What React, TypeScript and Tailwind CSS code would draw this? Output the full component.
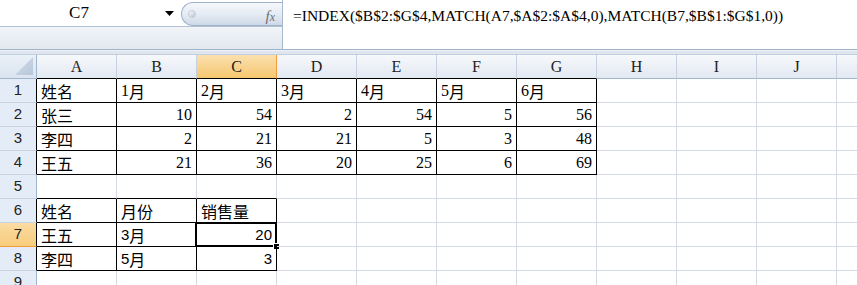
import React from "react";

const COLS = ["A", "B", "C", "D", "E", "F", "G", "H", "I", "J"];

type Cell = { v: string; right?: boolean; sans?: boolean };

const data: Record<number, Record<number, Cell>> = {
  1: { 0: { v: "姓名" }, 1: { v: "1月" }, 2: { v: "2月" }, 3: { v: "3月" }, 4: { v: "4月" }, 5: { v: "5月" }, 6: { v: "6月" } },
  2: { 0: { v: "张三" }, 1: { v: "10", right: true }, 2: { v: "54", right: true }, 3: { v: "2", right: true }, 4: { v: "54", right: true }, 5: { v: "5", right: true }, 6: { v: "56", right: true } },
  3: { 0: { v: "李四" }, 1: { v: "2", right: true }, 2: { v: "21", right: true }, 3: { v: "21", right: true }, 4: { v: "5", right: true }, 5: { v: "3", right: true }, 6: { v: "48", right: true } },
  4: { 0: { v: "王五" }, 1: { v: "21", right: true }, 2: { v: "36", right: true }, 3: { v: "20", right: true }, 4: { v: "25", right: true }, 5: { v: "6", right: true }, 6: { v: "69", right: true } },
  6: { 0: { v: "姓名" }, 1: { v: "月份" }, 2: { v: "销售量" } },
  7: { 0: { v: "王五" }, 1: { v: "3月", sans: true }, 2: { v: "20", right: true, sans: true } },
  8: { 0: { v: "李四" }, 1: { v: "5月", sans: true }, 2: { v: "3", right: true, sans: true } },
};

function inTable(r: number, c: number) {
  if (r >= 1 && r <= 4 && c >= 0 && c <= 6) return true;
  if (r >= 6 && r <= 8 && c >= 0 && c <= 2) return true;
  return false;
}

function Txt({ s, sans }: { s: string; sans?: boolean }) {
  const parts = s.split(/([\u4e00-\u9fff]+)/).filter((p) => p.length > 0);
  return (
    <>
      {parts.map((p, i) =>
        /[\u4e00-\u9fff]/.test(p) ? (
          <span key={i} className="text-[16px] [font-family:'Noto_Sans_CJK_SC',sans-serif]">
            {p}
          </span>
        ) : sans ? (
          <span key={i} className="text-[15px] [font-family:'Liberation_Sans',Arial,sans-serif]">
            {p}
          </span>
        ) : (
          <span key={i} className="text-[16px] [font-family:'Liberation_Serif',serif]">
            {p}
          </span>
        )
      )}
    </>
  );
}

function FxPill() {
  return (
    <div className="relative w-[101px] h-[24px] mt-[2px] rounded-l-full border border-r-0 border-[#9fb1c8] bg-gradient-to-b from-[#f5f7fb] via-[#e6ecf4] to-[#cfd9e7] flex items-center">
      <div className="ml-[6px] w-[8px] h-[8px] rounded-full bg-gradient-to-br from-[#fdfdfe] to-[#b9c4d2] border border-[#c2ccd8]" />
      <span className="absolute right-[7px] top-[2px] text-[15px] italic text-[#6b6f75] [font-family:'Liberation_Serif',serif]">
        f<span className="text-[12px]">x</span>
      </span>
    </div>
  );
}

export default function App() {
  const rows = [1, 2, 3, 4, 5, 6, 7, 8, 9];
  return (
    <div className="w-[857px] h-[285px] overflow-hidden bg-white relative">
      {/* Formula bar */}
      <div className="flex h-[50px] border-b border-[#a3b3c7]">
        <div className="w-[282px] flex flex-col">
          <div className="h-[27px] flex items-start bg-white border-b border-[#b3c1d3]">
            <div className="w-[158px] h-[26px] flex items-center justify-center text-[17px] text-black [font-family:'Liberation_Serif',serif]">
              C7
            </div>
            <div className="w-[23px] h-[26px] flex items-center justify-center">
              <svg width="9" height="5" viewBox="0 0 9 5">
                <polygon points="0,0 9,0 4.5,5" fill="#000" />
              </svg>
            </div>
            <FxPill />
          </div>
          <div className="flex-1 bg-gradient-to-b from-[#f1f4f8] to-[#e2e8f0]" />
        </div>
        <div className="flex-1 bg-white border-l border-[#a8b8cc] pl-[10px] pt-[6px] leading-[20px] text-black whitespace-nowrap text-[15.5px] [font-family:'Liberation_Serif',serif]">
          =INDEX($B$2:$G$4,MATCH(A7,$A$2:$A$4,0),MATCH(B7,$B$1:$G$1,0))
        </div>
      </div>
      <div className="h-[5px] bg-[#dfe6ef] border-b border-[#c3cfdd] border-t border-t-[#eef2f7]" />

      {/* Sheet grid */}
      <div className="grid grid-cols-[37px_repeat(10,80px)_1fr]">
        {/* header row */}
        <div className="h-[24px] border-r border-b border-[#9eb6ce] bg-gradient-to-b from-[#eaf0f7] to-[#dbe4ef] flex items-end justify-end">
          <svg width="20" height="20" viewBox="0 0 20 20" className="mr-[2px] mb-[2px]">
            <defs>
              <linearGradient id="tri" x1="0" y1="0" x2="1" y2="1">
                <stop offset="0" stopColor="#d3deeb" />
                <stop offset="1" stopColor="#b6c6da" />
              </linearGradient>
            </defs>
            <polygon points="19,1 19,19 1,19" fill="url(#tri)" />
          </svg>
        </div>
        {COLS.map((c, ci) => {
          const sel = ci === 2;
          const bottomBlack = inTable(1, ci);
          return (
            <div
              key={c}
              className={`h-[24px] border-r border-b flex items-center justify-center text-[16px] text-[#222] [font-family:'Liberation_Serif',serif] ${
                sel
                  ? "bg-gradient-to-b from-[#fbe0ae] to-[#f5c76f] border-r-[#f29b3a]"
                  : "bg-gradient-to-b from-[#f6f8fb] to-[#e3e9f2] border-r-[#c5d1e0]"
              } ${bottomBlack ? "border-b-black" : sel ? "border-b-[#f29b3a]" : "border-b-[#9eb6ce]"}`}
            >
              {c}
            </div>
          );
        })}
        <div className="h-[24px] border-b border-[#9eb6ce] bg-gradient-to-b from-[#f6f8fb] to-[#e3e9f2]" />

        {rows.map((r) => (
          <React.Fragment key={r}>
            <div
              className={`h-[24px] border-r border-b flex items-center justify-center text-[15px] text-[#222] [font-family:'Liberation_Sans',Arial,sans-serif] ${
                r === 7
                  ? "bg-gradient-to-b from-[#fbdca3] to-[#f7cc7c] border-b-[#f29b3a]"
                  : "bg-[#e4ecf7] border-b-[#c6d3e3]"
              } ${inTable(r, 0) ? "border-r-black" : "border-r-[#9eb6ce]"}`}
            >
              {r}
            </div>
            {COLS.map((_, ci) => {
              const cell = data[r]?.[ci];
              const rb = inTable(r, ci) || inTable(r, ci + 1);
              const bb = inTable(r, ci) || inTable(r + 1, ci);
              const isSel = r === 7 && ci === 2;
              return (
                <div
                  key={ci}
                  className={`relative h-[24px] border-r border-b flex items-center pt-[1px] whitespace-nowrap text-black ${
                    rb ? "border-r-black" : "border-r-[#d4dbe6]"
                  } ${bb ? "border-b-black" : "border-b-[#d4dbe6]"} ${
                    cell?.right ? "justify-end pr-[4px]" : "justify-start pl-[4px]"
                  }`}
                >
                  {cell && <Txt s={cell.v} sans={cell.sans} />}
                  {isSel && (
                    <>
                      <div className="absolute left-[-2px] top-[-1px] right-[-1px] bottom-[-1px] border-2 border-black pointer-events-none" />
                      <div className="absolute right-[-4px] bottom-[-4px] w-[7px] h-[7px] bg-black border border-white" />
                    </>
                  )}
                </div>
              );
            })}
            <div className="h-[24px] border-b border-b-[#d4dbe6]" />
          </React.Fragment>
        ))}
      </div>
    </div>
  );
}
